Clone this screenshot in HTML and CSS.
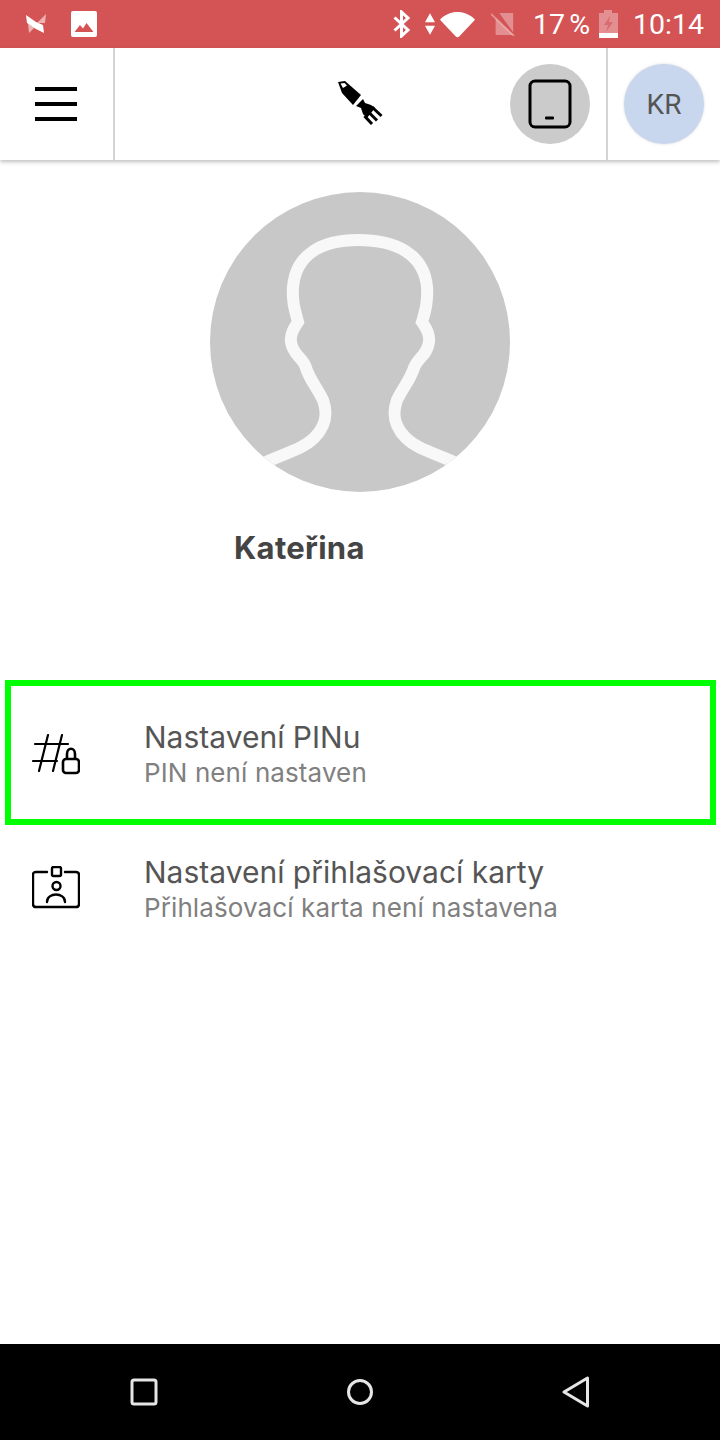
FILE: index.html
```html
<!DOCTYPE html>
<html lang="cs">
<head>
<meta charset="utf-8">
<title>Nastavení</title>
<link rel="stylesheet" href="styles.css">
</head>
<body>
<div class="screen">
  <div class="status">
    <div class="status-left">
      <svg class="i-app" viewBox="0 0 20 20"><path fill="#fff" d="M0 1 L10 8 L17 11 L18 19 L10 15 L1 9 Z"/><path fill="#fff" opacity=".55" d="M20 0 L19 9 L11 9 Z M2 10 L9 13 L3 19 Z"/></svg>
      <svg class="i-photo" viewBox="0 0 26 26"><rect width="26" height="26" rx="2" fill="#fff"/><path fill="#d45456" d="M3.500 21 L9 14 L12 17.500 L15.500 12 L22.500 21 Z"/></svg>
    </div>
    <div class="status-right">
      <svg class="i-bt" viewBox="0 0 18 28"><path fill="none" stroke="#fff" stroke-width="3" d="M1.500 7.500 L15 20 L8.500 26 V2 L15 8 L1.500 20.500"/></svg>
      <svg class="i-updown" viewBox="0 0 12 26"><path fill="#fff" d="M6 0 L12 11 H0 Z M0 15 H12 L6 26 Z"/></svg>
      <svg class="i-wifi" viewBox="0 0 36 26"><path fill="#fff" d="M0 8 C10 -2.500 26 -2.500 36 8 L20 25 Q18 27 16 25 Z"/></svg>
      <svg class="i-sim" viewBox="0 0 26 26"><path fill="#fff" opacity=".35" d="M5 7 L24 25 H5 Z M9 1 H24 V22 Z"/><path stroke="#fff" opacity=".35" stroke-width="2" d="M0 2 L25 26"/></svg>
      <span class="pct">17 %</span>
      <svg class="i-batt" viewBox="0 0 19 28"><path fill="#fff" opacity=".35" d="M0 3 H5 V0 H13 V3 H19 V23 H0 Z"/><path fill="#d45456" opacity=".6" d="M11 6 L5 15 H9 L7 22 L14 12 H10 Z"/><rect y="23" width="19" height="5" fill="#fff"/></svg>
      <span class="time">10:14</span>
    </div>
  </div>

  <header class="header">
    <div class="menu-cell">
      <span class="bar"></span><span class="bar"></span><span class="bar"></span>
    </div>
    <div class="center-cell">
      <svg class="logo" viewBox="12 12 46 46">
        <path d="M13 13 L20 12 L36 26 L28 36 L17 24 Z"/>
        <path fill="#fff" d="M15.500 14.500 L19.500 14 L22 16.500 L18 19 Z"/>
        <path d="M31 37 L38 30 L40 34 L46 36 L50 39 L42 49 L38 45 L36 39 Z"/>
        <g fill="none" stroke="#000" stroke-width="3" stroke-linecap="butt">
          <path d="M47 38 L56.500 47"/>
          <path d="M43.500 43 L52 51.500"/>
          <path d="M39.500 47 L47 55"/>
        </g>
      </svg>
      <div class="device-btn">
        <svg class="device" viewBox="0 0 44 50"><rect x="2" y="2" width="40" height="46" rx="5" fill="none" stroke="#000" stroke-width="3"/><rect x="17" y="37.500" width="9" height="3" rx="1" fill="#000"/></svg>
      </div>
    </div>
    <div class="user-cell">
      <div class="user-avatar">KR</div>
    </div>
  </header>

  <main class="main">
    <svg class="avatar" viewBox="0 0 300 300">
      <defs>
        <clipPath id="round"><circle cx="150" cy="150" r="150"/></clipPath>
        <filter id="soft"><feGaussianBlur stdDeviation="0.6"/></filter>
      </defs>
      <g clip-path="url(#round)">
        <rect width="300" height="300" fill="#c8c8c8"/>
        <path filter="url(#soft)" fill="none" stroke="#f8f8f8" stroke-width="12" d="M52 272 C72 262 92 258 104 246 C116 234 118 222 113 208 C106 194 100 188 96 176 C94 166 83 164 81 150 C80 142 84 136 88 130 C85 118 82 110 83 95 C86 62 112 48 148 48 C186 48 214 62 217 95 C218 110 215 120 212 130 C216 136 220 142 219 150 C217 164 207 166 204 176 C200 188 194 194 187 208 C182 222 184 234 196 246 C208 258 228 262 248 272"/>
      </g>
    </svg>
    <div class="name">Kateřina</div>

    <div class="list">
      <div class="row row-focus">
        <svg class="row-icon icon-pin" viewBox="0 0 48 42"><g fill="none" stroke="#000" stroke-width="2.200" stroke-linecap="round"><path d="M3 11 H36 M1 28 H25 M16 2 L7 38 M30 2 L21 38"/></g><path fill="none" stroke="#000" stroke-width="2.600" d="M35 26 V21 C35 14 43 14 43 21 V26"/><rect x="31" y="26" width="16" height="14" rx="3" fill="none" stroke="#000" stroke-width="2.600"/></svg>
        <div class="row-text">
          <div class="row-title">Nastavení PINu</div>
          <div class="row-sub">PIN není nastaven</div>
        </div>
      </div>
      <div class="row row-plain">
        <svg class="row-icon icon-card" viewBox="0 0 48 44"><g fill="none" stroke="#000" stroke-width="2.400"><path stroke-linecap="round" d="M15 6 H4 Q1 6 1 9 V38 Q1 41 4 41 H44 Q47 41 47 38 V9 Q47 6 44 6 H33"/><rect x="20" y="1" width="9" height="9" rx="1.500"/><circle cx="24.500" cy="20" r="4"/><path stroke-linecap="round" d="M15 36 C15 26 33 26 33 36"/></g></svg>
        <div class="row-text">
          <div class="row-title">Nastavení přihlašovací karty</div>
          <div class="row-sub">Přihlašovací karta není nastavena</div>
        </div>
      </div>
    </div>
  </main>

  <nav class="nav">
    <svg class="nav-i" viewBox="0 0 28 28"><rect x="2" y="2" width="24" height="24" rx="2" fill="none" stroke="#e6e6e6" stroke-width="3"/></svg>
    <svg class="nav-i" viewBox="0 0 28 28"><circle cx="14" cy="14" r="11.500" fill="none" stroke="#e6e6e6" stroke-width="3"/></svg>
    <svg class="nav-i" viewBox="0 0 28 32"><path d="M25.500 2 V30 L2 16 Z" fill="none" stroke="#e6e6e6" stroke-width="3" stroke-linejoin="round"/></svg>
  </nav>
</div>
</body>
</html>
```
FILE: styles.css
```css
* { box-sizing: border-box; }
html, body { margin: 0; padding: 0; background: #fff; }
.screen { width: 720px; height: 1440px; display: flex; flex-direction: column; overflow: hidden; font-family: "Inter", sans-serif; }

.status { height: 48px; flex: none; background: #d45456; display: flex; justify-content: space-between; align-items: center; padding: 0 16px 0 26px; color: #fff; font-family: "Roboto", sans-serif; font-size: 28.500px; }
.status-left, .status-right { display: flex; align-items: center; }
.i-app { width: 20px; height: 20px; }
.i-photo { width: 26px; height: 26px; margin-left: 25px; }
.i-bt { width: 18px; height: 28px; }
.i-updown { width: 10px; height: 22px; margin-left: 14px; }
.i-wifi { width: 35px; height: 27px; margin-left: 5px; }
.i-sim { width: 24px; height: 24px; margin-left: 16px; }
.pct { margin-left: 18px; white-space: nowrap; word-spacing: -3px; }
.i-batt { width: 19px; height: 28px; margin-left: 9px; }
.time { margin-left: 15px; }

.header { height: 112px; flex: none; display: flex; background: #fff; box-shadow: 0 2px 4px rgba(0,0,0,.25); position: relative; z-index: 1; }
.menu-cell { width: 115px; flex: none; border-right: 2px solid #d4d4d4; display: flex; flex-direction: column; align-items: center; justify-content: center; gap: 11px; padding-right: 2px; }
.bar { display: block; width: 42px; height: 4px; background: #000; }
.center-cell { flex: 1; display: grid; grid-template-columns: 1fr auto 1fr; align-items: center; padding-right: 16px; border-right: 2px solid #d4d4d4; }
.logo { grid-column: 2; width: 46px; height: 46px; margin-left: 14px; }
.device-btn { grid-column: 3; justify-self: end; width: 80px; height: 80px; border-radius: 50%; background: #cbcbcb; display: flex; align-items: center; justify-content: center; }
.device { width: 44px; height: 50px; }
.user-cell { width: 112px; flex: none; display: flex; align-items: center; padding-left: 16px; }
.user-avatar { width: 80px; height: 80px; border-radius: 50%; background: #c8d7ee; color: #555; font-family: "Roboto", sans-serif; font-size: 28px; display: flex; align-items: center; justify-content: center; box-shadow: 0 0 3px rgba(0,0,0,.15); }

.main { flex: 1; display: flex; flex-direction: column; padding-top: 32px; }
.avatar { width: 300px; height: 300px; display: block; margin-left: 210px; flex: none; }
.name { margin: 36px 0 0 234px; font-size: 31px; line-height: 40px; font-weight: 700; color: #444; letter-spacing: .3px; }
.list { margin-top: 112px; }
.row { display: flex; align-items: center; margin: 0 4px 0 5px; border: 6px solid transparent; padding-left: 21px; gap: 64px; }
.row-focus { height: 145px; border-color: #00ff00; }
.row-plain { height: 125px; }
.row-icon { width: 48px; flex: none; }
.row-text { padding-top: 3px; }
.icon-pin { height: 42px; margin-top: 3px; }
.icon-card { height: 44px; margin-top: 1px; }
.row-title { font-size: 30px; line-height: 36px; color: #555; }
.row-sub { font-size: 26px; line-height: 34px; margin-top: 1px; color: #808080; letter-spacing: .1px; }

.nav { height: 96px; flex: none; background: #000; display: flex; align-items: center; justify-content: space-between; padding: 0 130px; }
.nav-i { width: 28px; height: 32px; }
```
